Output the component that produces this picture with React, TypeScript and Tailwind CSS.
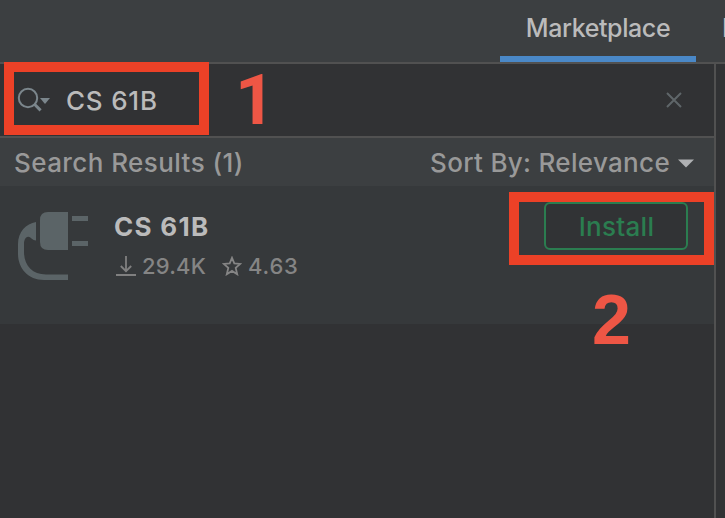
import React from "react";

function SearchIcon() {
  return (
    <svg width="34" height="28" viewBox="0 0 34 28" fill="none" className="shrink-0">
      <circle cx="11" cy="12" r="9.2" stroke="#7b868c" strokeWidth="2" />
      <path d="M17 17.8L23.6 24.4" stroke="#7b868c" strokeWidth="3" />
      <path d="M23 12H33L28 18Z" fill="#7b868c" />
    </svg>
  );
}

function PlugIcon() {
  return (
    <svg width="72" height="70" viewBox="0 0 72 70" fill="none" className="shrink-0">
      <path d="M50 1V39H30Q22 39 22 31V9Q22 1 30 1Z" fill="#5b6467" />
      <path d="M54 5H70V10H54ZM54 30H70V35H54Z" fill="#5b6467" />
      <path
        d="M18 11V29.5Q15.5 29.5 13.5 27.5Q11.5 25 9 26Q6 27.5 6 33V41C6 54 14 63.5 28 63.5H50V69H26C10 69 0 57 0 43V33C0 21 8 12.5 18 11Z"
        fill="#5b6467"
      />
    </svg>
  );
}

function DownloadIcon() {
  return (
    <svg width="20" height="22" viewBox="0 0 20 22" fill="none" stroke="#808080" className="shrink-0">
      <path d="M10 1V16M4.8 11L10 16.2L15.2 11" strokeWidth="1.8" />
      <path d="M0 20H20" strokeWidth="2" />
    </svg>
  );
}

function StarIcon() {
  return (
    <svg width="20" height="20" viewBox="0 0 20 20" fill="none" className="shrink-0">
      <path
        d="M10 1.8L12.3 7.4L18.3 7.9L13.7 11.9L15.2 18.2L10 14.9L4.8 18.2L6.3 11.9L1.7 7.9L7.7 7.4Z"
        stroke="#858585"
        strokeWidth="1.8"
      />
    </svg>
  );
}

export default function App() {
  return (
    <div className="relative flex h-[518px] w-[725px] flex-col overflow-hidden bg-[#313234] font-['Inter',sans-serif] text-[26px] leading-8 font-[450] whitespace-nowrap text-[#bbbbbb]">
      <header className="flex h-16 shrink-0 border-b-2 border-[#515151] bg-[#3c3f41] pl-[500px] text-[25px]">
        <div className="flex w-[196px] shrink-0 justify-center border-b-[6px] border-[#4a88c7] pt-3">
          <span className="tracking-[-0.4px]">Marketplace</span>
        </div>
        <span className="shrink-0 pt-3 pl-[26px]">Installed</span>
      </header>

      <div className="flex flex-1">
        <main className="flex w-[716px] shrink-0 flex-col border-r-2 border-[#515151]">
          <div className="flex h-[74px] items-center border-b-2 border-[#515151] pr-8 pl-[17px]">
            <SearchIcon />
            <span className="ml-[15px] flex-1 pt-0.5 tracking-[0.8px]">CS 61B</span>
            <svg width="16" height="16" viewBox="0 0 16 16" className="shrink-0">
              <path d="M1 1L15 15M15 1L1 15" stroke="#5f6669" strokeWidth="2" />
            </svg>
          </div>

          <div className="flex h-12 items-center justify-between bg-[#3c3f41] pr-5 pl-[14px] text-[#999999]">
            <span className="pt-0.5 tracking-[0.42px]">Search Results (1)</span>
            <div className="flex items-center">
              <span className="pt-0.5 tracking-[0.32px]">Sort By: Relevance</span>
              <svg width="16" height="9" viewBox="0 0 16 9" className="mt-0.5 ml-2">
                <path d="M0 0.5H16L8 8.5Z" fill="#afb1b3" />
              </svg>
            </div>
          </div>

          <div className="flex h-[138px] items-start bg-[#36393b] pr-[26px] pl-[18px]">
            <div className="pt-[25px]">
              <PlugIcon />
            </div>
            <div className="ml-6 flex-1 pt-[25px]">
              <div className="font-bold tracking-[1.3px]">CS 61B</div>
              <div className="mt-[7px] flex h-8 items-center pl-[2px] text-[22px] text-[#858585]">
                <DownloadIcon />
                <span className="ml-[6px] w-[64px] tracking-[0.2px]">29.4K</span>
                <span className="ml-4 flex">
                  <StarIcon />
                </span>
                <span className="ml-[6px] tracking-[0.8px]">4.63</span>
              </div>
            </div>
            <button className="mt-4 flex h-12 w-36 items-center justify-center rounded-[6px] border-2 border-[#2b7d50] bg-[#313335] text-[#2b7d50]">
              <span className="pt-0.5 pl-px tracking-[0.3px]">Install</span>
            </button>
          </div>
        </main>
      </div>

      <div className="absolute top-[62px] left-1 h-[73px] w-[205px] border-10 border-[#ec4127]" />
      <div className="absolute top-[192px] left-[509px] h-[73px] w-[205px] border-10 border-[#ec4127]" />
      <span className="absolute top-[65px] left-[235px] font-['Roboto',sans-serif] text-[70px] leading-[70px] font-bold text-[#ee5645]">
        1
      </span>
      <span className="absolute top-[285px] left-[592px] font-['Liberation_Sans',sans-serif] text-[70px] leading-[70px] font-bold text-[#ee5645]">
        2
      </span>
    </div>
  );
}
